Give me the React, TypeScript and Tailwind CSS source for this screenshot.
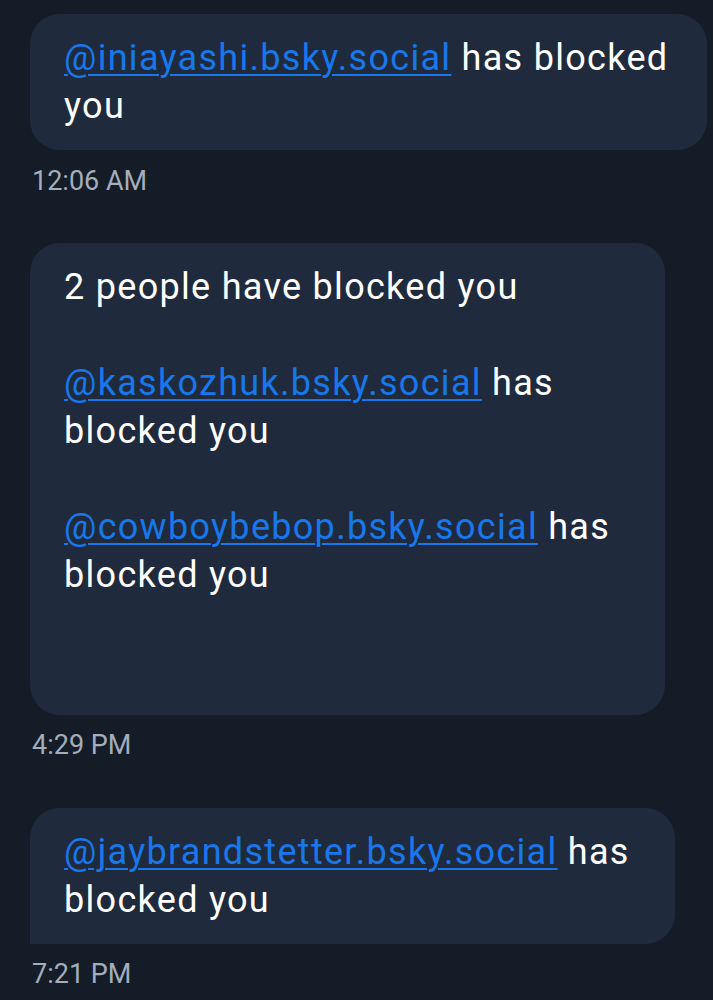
const bubble =
  "bg-[#1f2b3d] pl-[34px] text-[36px] leading-[48px] tracking-[1.3px] text-white";
const link = "text-[#1877ea] underline decoration-[2px] underline-offset-[4px]";
const stamp = "text-[27px] leading-[32px] text-[#a3adbb]";

export default function App() {
  return (
    <div
      className="min-h-[1000px] w-[713px] overflow-hidden bg-[#141c28] pl-[30px] pt-[14px]"
      style={{ fontFamily: "Roboto, 'Liberation Sans', sans-serif" }}
    >
      <div className={`${bubble} w-[677px] rounded-[30px] py-[20px] pr-[28px]`}>
        <a className={link}>@iniayashi.bsky.social</a> has blocked you
      </div>
      <div className={`${stamp} ml-[2px] mt-[15px]`}>12:06 AM</div>

      <div className={`${bubble} mt-[46px] w-[635px] rounded-[30px] py-[20px] pr-[28px]`}>
        <p>2 people have blocked you</p>
        <p>&nbsp;</p>
        <p>
          <a className={link}>@kaskozhuk.bsky.social</a> has blocked you
        </p>
        <p>&nbsp;</p>
        <p>
          <a className={link}>@cowboybebop.bsky.social</a> has blocked you
        </p>
        <p>&nbsp;</p>
        <p>&nbsp;</p>
      </div>
      <div className={`${stamp} ml-[2px] mt-[14px]`}>4:29 PM</div>

      <div
        className={`${bubble} mt-[47px] w-[645px] rounded-[30px] rounded-bl-none py-[20px] pr-[28px]`}
      >
        <a className={link}>@jaybrandstetter.bsky.social</a> has blocked you
      </div>
      <div className={`${stamp} ml-[2px] mt-[14px]`}>7:21 PM</div>
    </div>
  );
}
